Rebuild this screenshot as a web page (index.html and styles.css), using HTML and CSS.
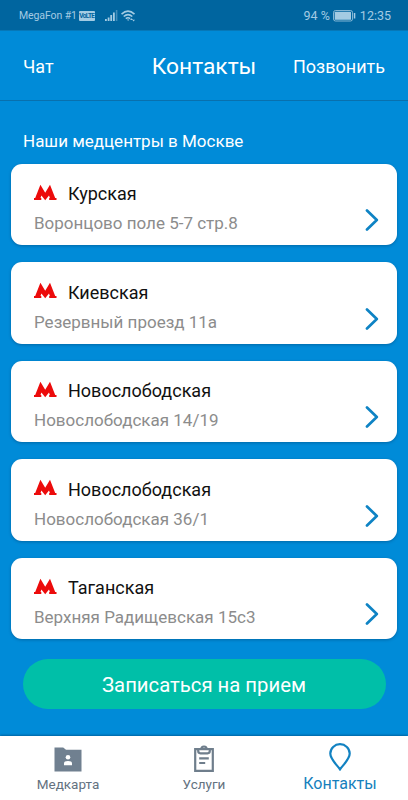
FILE: index.html
```html
<!DOCTYPE html>
<html lang="ru">
<head>
  <meta charset="UTF-8">
  <meta name="viewport" content="width=device-width, initial-scale=1">
  <title>Контакты</title>
  <link rel="stylesheet" href="styles.css">
</head>
<body>
  <svg class="sprite" aria-hidden="true">
    <symbol id="metro" viewBox="0 0 24 17">
      <path d="M1 14h1.200L7.400 0.800l4.800 8 4.800-8L22.200 14h1.300v2h-7.300v-2h0.700l-0.900-2.600-3.800 4.800-3.800-4.800L7.500 14h0.800v2H1z"/>
    </symbol>
    <symbol id="chevron" viewBox="0 0 14 22">
      <path d="M2 1.500L11.800 11 2 20.500"/>
    </symbol>
  </svg>

  <div class="status-bar">
    <span class="carrier">MegaFon #1</span>
    <span class="volte"><span>VoLTE</span></span>
    <svg class="signal" width="13" height="11" viewBox="0 0 13 11">
      <path d="M0 9h1.800v2H0zM2.700 7.500h1.800V11H2.700zM5.300 5h1.800v6H5.300zM8 2.500h1.800V11H8z"/>
      <path class="dim" d="M10.800 0h1.600v11h-1.600z"/>
    </svg>
    <svg class="wifi" width="15" height="12" viewBox="0 0 15 12">
      <path d="M0.500 4.100Q7 -1.900 13.500 4.100M2.700 6.500Q7 2.700 11.300 6.500M4.800 8.700Q7 6.800 9.200 8.700"/>
      <path class="fill" d="M6 9.600h2.200L7.100 11zM9 10l1.600-1.700 1.500 1.700zM11.300 9.700h2.700L12.600 11.400z"/>
    </svg>
    <span class="percent">94 %</span>
    <svg class="battery" width="23" height="12" viewBox="0 0 23 12">
      <rect class="shell" x="0.500" y="0.500" width="19" height="10.500" rx="2"/>
      <rect x="1.700" y="1.800" width="16.300" height="8" rx="0.500"/>
      <rect x="20.800" y="3" width="1.500" height="5.500"/>
    </svg>
    <span class="clock">12:35</span>
  </div>

  <header class="header">
    <a class="header-link">Чат</a>
    <h1>Контакты</h1>
    <a class="header-link call">Позвонить</a>
  </header>

  <main class="content">
    <h2>Наши медцентры в Москве</h2>

    <div class="cards">
      <div class="card">
        <div class="info">
          <div class="station"><svg class="metro"><use href="#metro"/></svg><span>Курская</span></div>
          <div class="address"><span>Воронцово поле 5-7 стр.8</span></div>
        </div>
        <svg class="chevron"><use href="#chevron"/></svg>
      </div>
      <div class="card">
        <div class="info">
          <div class="station"><svg class="metro"><use href="#metro"/></svg><span>Киевская</span></div>
          <div class="address"><span>Резервный проезд 11а</span></div>
        </div>
        <svg class="chevron"><use href="#chevron"/></svg>
      </div>
      <div class="card">
        <div class="info">
          <div class="station"><svg class="metro"><use href="#metro"/></svg><span>Новослободская</span></div>
          <div class="address"><span>Новослободская 14/19</span></div>
        </div>
        <svg class="chevron"><use href="#chevron"/></svg>
      </div>
      <div class="card">
        <div class="info">
          <div class="station"><svg class="metro"><use href="#metro"/></svg><span>Новослободская</span></div>
          <div class="address"><span>Новослободская 36/1</span></div>
        </div>
        <svg class="chevron"><use href="#chevron"/></svg>
      </div>
      <div class="card">
        <div class="info">
          <div class="station"><svg class="metro"><use href="#metro"/></svg><span>Таганская</span></div>
          <div class="address"><span>Верхняя Радищевская 15с3</span></div>
        </div>
        <svg class="chevron"><use href="#chevron"/></svg>
      </div>
    </div>

    <button class="book">Записаться на прием</button>
  </main>

  <nav class="tabs">
    <a class="tab">
      <svg width="28" height="26" viewBox="0 0 28 26">
        <path class="solid" d="M0.500 0.500h8.700l2.800 2.300h15.500v21.700h-27z"/>
        <circle class="hole" cx="14" cy="10.300" r="2.300"/>
        <path class="hole" d="M10 18.300v-1.900q0-2.400 4-2.400t4 2.400v1.900z"/>
      </svg>
      <span>Медкарта</span>
    </a>
    <a class="tab">
      <svg width="22" height="28" viewBox="0 0 22 28">
        <path class="line" d="M2.200 4.200h17.600v21.600H2.200z"/>
        <path class="line" d="M5.200 4.500v1.600q0 2.200 2.200 2.200h7.200q2.200 0 2.200-2.200V4.500M8.300 4.200a2.700 2.700 0 0 1 5.400 0"/>
        <path class="line" d="M6.200 13.300h9.600M6.200 18h6"/>
      </svg>
      <span>Услуги</span>
    </a>
    <a class="tab active">
      <svg width="22" height="28" viewBox="0 0 22 28">
        <path class="line" d="M11 26.300C8.500 22.500 1.300 16.500 1.300 10.600a9.700 9.400 0 0 1 19.400 0C20.700 16.500 13.500 22.500 11 26.300z"/>
      </svg>
      <span>Контакты</span>
    </a>
  </nav>
</body>
</html>
```
FILE: styles.css
```css
* {
  box-sizing: border-box;
}
body {
  margin: 0;
  height: 800px;
  display: flex;
  flex-direction: column;
  background-color: #008bd8;
  color: #fff;
  font-family: Roboto, sans-serif;
  overflow: hidden;
}
.sprite {
  position: absolute;
  width: 0;
  height: 0;
}

/* status bar */
.status-bar {
  height: 31px;
  flex: none;
  display: flex;
  align-items: center;
  padding: 1px 17px 0 19px;
  background-color: #00659f;
  border-bottom: 1px solid #0678b8;
  color: #a3cbe3;
  font-size: 12.5px;
}
.status-bar svg {
  fill: #a3cbe3;
}
.carrier {
  font-size: 10.5px;
  letter-spacing: -0.1px;
}
.volte {
  width: 16px;
  height: 10px;
  flex: none;
  margin-left: 2px;
  display: flex;
  align-items: center;
  justify-content: center;
  border-radius: 1px;
  background-color: #a3cbe3;
  color: #00659f;
  font-size: 6.5px;
  font-weight: 700;
  letter-spacing: -0.6px;
}
.signal {
  margin-left: 10px;
}
.signal .dim {
  opacity: 0.4;
}
.wifi {
  margin-left: 3px;
}
.status-bar .wifi path {
  fill: none;
  stroke: #a3cbe3;
  stroke-width: 1.6;
}
.status-bar .wifi .fill {
  fill: #a3cbe3;
  stroke: none;
}
.percent {
  margin-left: auto;
}
.battery {
  margin: 0 4px 0 3px;
}
.battery .shell {
  fill: none;
  stroke: #a3cbe3;
  stroke-width: 0.8;
}

/* header */
.header {
  height: 70px;
  flex: none;
  display: grid;
  grid-template-columns: 1fr auto 1fr;
  align-items: center;
  padding: 2px 23px 0;
  border-bottom: 1px solid #0870ad;
}
.header h1 {
  margin: 0;
  font-size: 22.8px;
  font-weight: 400;
}
.header-link {
  padding-bottom: 1px;
  font-size: 18px;
}
.call {
  text-align: right;
}

/* list of clinics */
.content {
  flex: 1;
  padding: 30px 11px 0;
}
.content h2 {
  margin: 0 0 12.5px 12px;
  font-size: 17px;
  font-weight: 400;
  line-height: 20px;
}
.cards {
  display: grid;
  gap: 17px;
}
.card {
  height: 81.6px;
  display: flex;
  align-items: flex-end;
  justify-content: space-between;
  padding: 0 18px 13px 23px;
  border-radius: 11px;
  background-color: #fff;
  box-shadow: 0 1px 3px rgba(0, 40, 80, 0.35);
}
.station {
  display: flex;
  align-items: center;
  color: #111;
  font-size: 18px;
  line-height: 22px;
}
.metro {
  width: 24px;
  height: 17px;
  margin: -4px 11px 0 -1px;
  fill: #ec0b0b;
}
.address {
  margin-top: 9px;
  color: #8c8c8c;
  font-size: 17px;
  line-height: 18px;
}
.chevron {
  width: 14px;
  height: 22px;
  margin-bottom: 1px;
  fill: none;
  stroke: #0e83c4;
  stroke-width: 2.7;
  stroke-linecap: round;
  stroke-linejoin: round;
}
.book {
  display: block;
  width: 363px;
  height: 50px;
  margin: 19.5px auto 0;
  padding: 3px 0 0;
  border: none;
  border-radius: 25px;
  background-color: #00bfa8;
  color: #fff;
  font-family: inherit;
  font-size: 20.3px;
}

/* bottom tabs */
.tabs {
  height: 64px;
  flex: none;
  display: grid;
  grid-template-columns: repeat(3, 1fr);
  background-color: #fff;
  box-shadow: 0 -1px 2px rgba(0, 40, 80, 0.4);
}
.tab {
  display: flex;
  flex-direction: column;
  align-items: center;
  justify-content: flex-end;
  padding-bottom: 8px;
  color: #64727f;
  font-size: 13.5px;
  line-height: 16px;
}
.tab svg {
  margin-bottom: 3px;
}
.tab .solid {
  fill: #708090;
}
.tab .hole {
  fill: #fff;
}
.tab .line {
  fill: none;
  stroke: #6f7e8c;
  stroke-width: 2.2;
}
.active {
  color: #1680bd;
  font-size: 16px;
}
.active svg {
  margin-bottom: 5px;
}
.active .line {
  stroke: #1282c2;
}
```
